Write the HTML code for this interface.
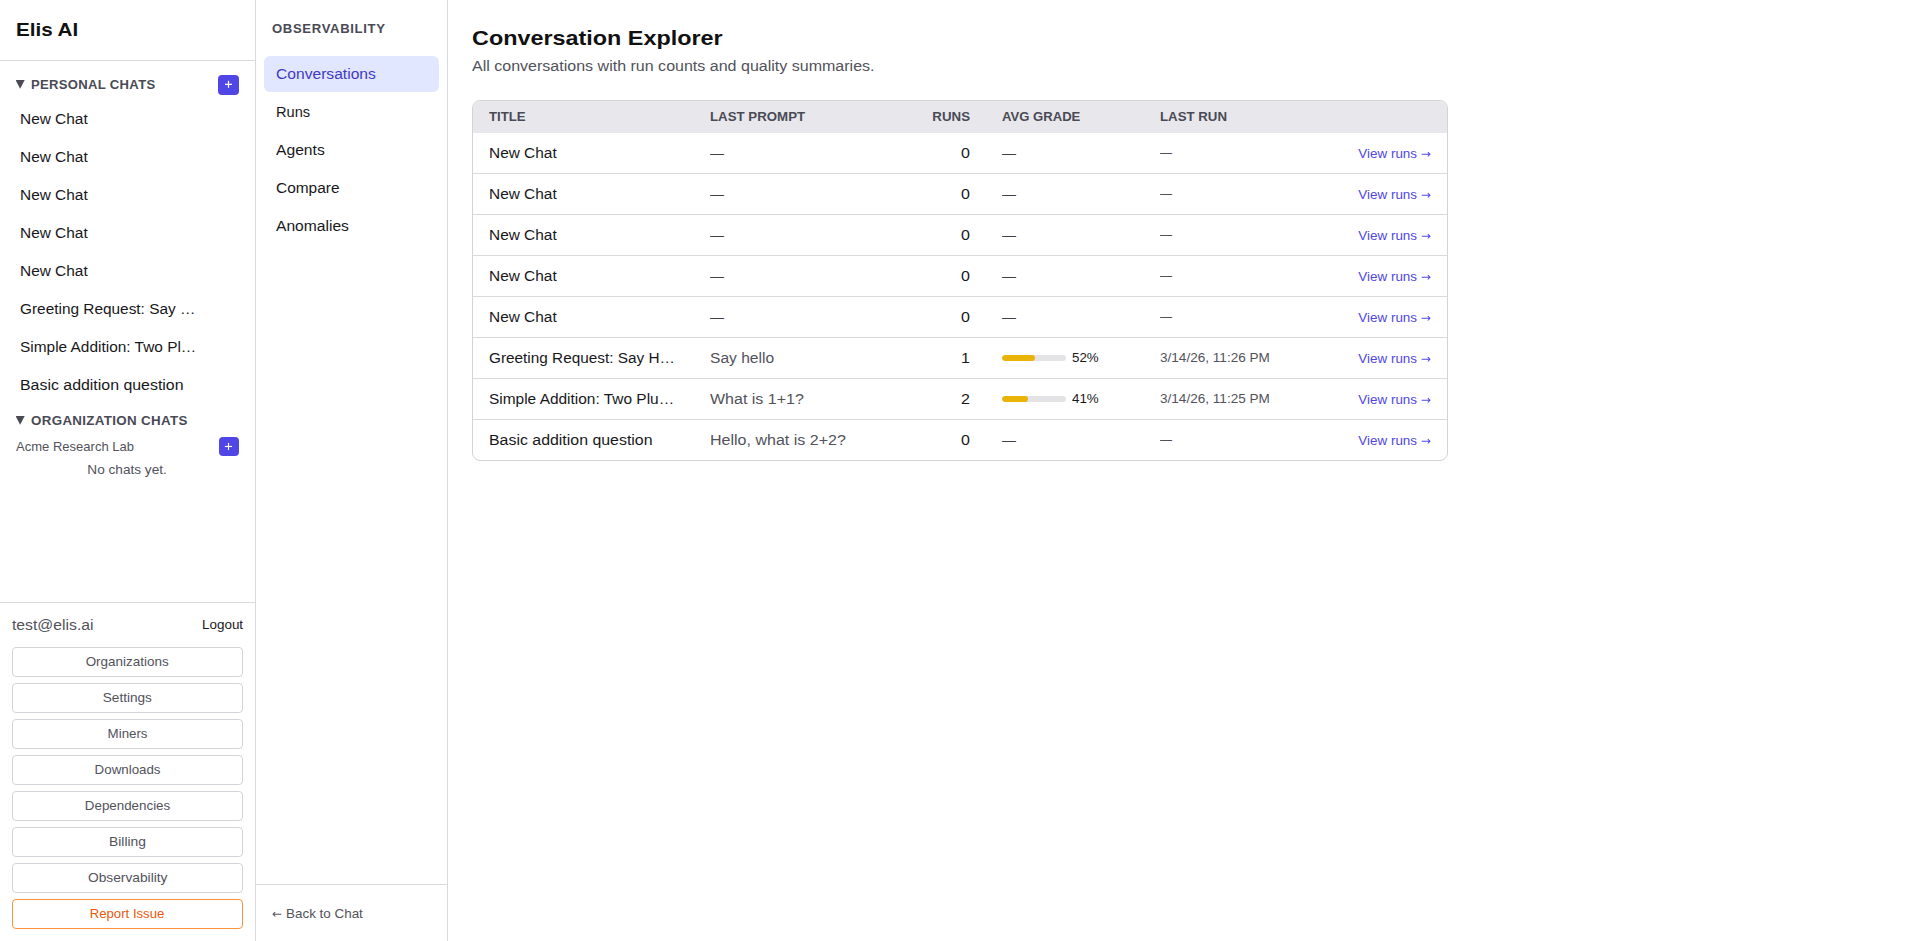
<!DOCTYPE html>
<html><head><meta charset="utf-8">
<style>
html,body{margin:0;padding:0;background:#fff;}
body{width:1920px;height:941px;overflow:hidden;position:relative;font-family:"Liberation Sans", sans-serif;color:#18181b;}

.t{position:absolute;white-space:nowrap;line-height:1;}
.s12{font-size:12px}.s14{font-size:14px}.s18{font-size:18px}.s20{font-size:20px}
.b{font-weight:bold}
.arr{position:absolute;width:10.055px;height:10.055px;overflow:visible}
.tri{position:absolute;width:9.1px;height:8.7px;background:#4a4a55;clip-path:polygon(0 0,100% 0,50% 100%)}
.hl{position:absolute;background:#d9d9de;}
.btn{position:absolute;left:12px;width:229px;height:28px;border:1px solid #d4d4d8;border-radius:4px;background:#fff;}
.btn>span{position:absolute;left:0;right:0;top:8px;text-align:center;font-size:12px;line-height:1;color:#52525b;white-space:nowrap}
.plus{position:absolute;background:#4f46e5;border-radius:4px;}
.plus svg{position:absolute;left:0;top:0;width:100%;height:100%}
</style></head>
<body>
<!-- left sidebar -->
<div class="hl" style="left:255px;top:0;width:1px;height:941px"></div>
<div class="hl" style="left:0;top:60px;width:255px;height:1px"></div>
<div class="t s18 b" style="left: 16px; top: 21px; color: rgb(17, 17, 17); line-height: 18px; font-size: 18.54px;"><span style="display:inline-block;transform:scaleX(1.1122);transform-origin:left center">Elis AI</span></div>

<div class="tri" style="left:15.6px;top:80.1px"></div>
<div class="t s12 b" style="left: 31px; top: 79px; color: rgb(74, 74, 85); letter-spacing: 0.3px; line-height: 12px; font-size: 12.36px;"><span style="display:inline-block;transform:scaleX(1.0572);transform-origin:left center">PERSONAL CHATS</span></div>
<div class="plus" style="left:218px;top:75px;width:21px;height:20px"><svg viewBox="0 0 21 20"><rect x="7" y="8.7" width="7" height="1.25" fill="#fff"></rect><rect x="9.875" y="5.8" width="1.25" height="7" fill="#fff"></rect></svg></div>

<div class="t s14" style="left: 20px; top: 112px; line-height: 14px; font-size: 14.42px;"><span style="display:inline-block;transform:scaleX(1.0701);transform-origin:left center">New Chat</span></div>
<div class="t s14" style="left: 20px; top: 150px; line-height: 14px; font-size: 14.42px;"><span style="display:inline-block;transform:scaleX(1.0701);transform-origin:left center">New Chat</span></div>
<div class="t s14" style="left: 20px; top: 188px; line-height: 14px; font-size: 14.42px;"><span style="display:inline-block;transform:scaleX(1.0701);transform-origin:left center">New Chat</span></div>
<div class="t s14" style="left: 20px; top: 226px; line-height: 14px; font-size: 14.42px;"><span style="display:inline-block;transform:scaleX(1.0701);transform-origin:left center">New Chat</span></div>
<div class="t s14" style="left: 20px; top: 264px; line-height: 14px; font-size: 14.42px;"><span style="display:inline-block;transform:scaleX(1.0701);transform-origin:left center">New Chat</span></div>
<div class="t s14" style="left: 20px; top: 302px; line-height: 14px; font-size: 14.42px;"><span style="display:inline-block;transform:scaleX(1.0682);transform-origin:left center">Greeting Request: Say …</span></div>
<div class="t s14" style="left: 20px; top: 340px; line-height: 14px; font-size: 14.42px;"><span style="display:inline-block;transform:scaleX(1.0703);transform-origin:left center">Simple Addition: Two Pl…</span></div>
<div class="t s14" style="left: 20px; top: 378px; line-height: 14px; font-size: 14.42px;"><span style="display:inline-block;transform:scaleX(1.1036);transform-origin:left center">Basic addition question</span></div>

<div class="tri" style="left:15.6px;top:416.1px"></div>
<div class="t s12 b" style="left: 31px; top: 415px; color: rgb(74, 74, 85); letter-spacing: 0.3px; line-height: 12px; font-size: 12.36px;"><span style="display:inline-block;transform:scaleX(1.0803);transform-origin:left center">ORGANIZATION CHATS</span></div>
<div class="t s12" style="left: 16px; top: 441px; color: rgb(82, 82, 91); line-height: 12px; font-size: 12.36px;"><span style="display:inline-block;transform:scaleX(1.0537);transform-origin:left center">Acme Research Lab</span></div>
<div class="plus" style="left:219px;top:437px;width:20px;height:19px"><svg viewBox="0 0 20 19"><rect x="5.9" y="8.9" width="7.2" height="1.15" fill="#fff"></rect><rect x="8.925" y="5.9" width="1.15" height="7.1" fill="#fff"></rect></svg></div>
<div class="t s12" style="left: 0px; width: 255px; text-align: center; top: 464px; color: rgb(82, 82, 91); line-height: 12px; font-size: 12.36px;"><span style="display:inline-block;transform:scaleX(1.1016);transform-origin:center center">No chats yet.</span></div>

<div class="hl" style="left:0;top:602px;width:255px;height:1px"></div>
<div class="t s14" style="left: 12px; top: 618px; color: rgb(82, 82, 91); line-height: 14px; font-size: 14.42px;"><span style="display:inline-block;transform:scaleX(1.0912);transform-origin:left center">test@elis.ai</span></div>
<div class="t s12" style="left: 202px; top: 619px; color: rgb(24, 24, 27); line-height: 12px; font-size: 12.36px;"><span style="display:inline-block;transform:scaleX(1.0868);transform-origin:left center">Logout</span></div>
<div class="btn" style="top:647px"><span style="line-height: 12px; font-size: 12.36px;"><span style="display:inline-block;transform:scaleX(1.0879);transform-origin:center center">Organizations</span></span></div>
<div class="btn" style="top:683px"><span style="line-height: 12px; font-size: 12.36px;"><span style="display:inline-block;transform:scaleX(1.1018);transform-origin:center center">Settings</span></span></div>
<div class="btn" style="top:719px"><span style="line-height: 12px; font-size: 12.36px;"><span style="display:inline-block;transform:scaleX(1.0750);transform-origin:center center">Miners</span></span></div>
<div class="btn" style="top:755px"><span style="line-height: 12px; font-size: 12.36px;"><span style="display:inline-block;transform:scaleX(1.0777);transform-origin:center center">Downloads</span></span></div>
<div class="btn" style="top:791px"><span style="line-height: 12px; font-size: 12.36px;"><span style="display:inline-block;transform:scaleX(1.0807);transform-origin:center center">Dependencies</span></span></div>
<div class="btn" style="top:827px"><span style="line-height: 12px; font-size: 12.36px;"><span style="display:inline-block;transform:scaleX(1.1156);transform-origin:center center">Billing</span></span></div>
<div class="btn" style="top:863px"><span style="line-height: 12px; font-size: 12.36px;"><span style="display:inline-block;transform:scaleX(1.1131);transform-origin:center center">Observability</span></span></div>
<div class="btn" style="top:899px;border-color:#fb923c"><span style="color: rgb(234, 88, 12); line-height: 12px; font-size: 12.36px;"><span style="display:inline-block;transform:scaleX(1.0649);transform-origin:center center">Report Issue</span></span></div>

<!-- middle nav -->
<div class="hl" style="left:447px;top:0;width:1px;height:941px"></div>
<div class="hl" style="left:256px;top:884px;width:191px;height:1px"></div>
<div class="t s12 b" style="left: 272px; top: 23px; color: rgb(74, 74, 85); letter-spacing: 0.6px; line-height: 12px; font-size: 12.36px;"><span style="display:inline-block;transform:scaleX(1.0624);transform-origin:left center">OBSERVABILITY</span></div>
<div style="position:absolute;left:264px;top:56px;width:175px;height:36px;background:#e0e7ff;border-radius:6px"></div>
<div class="t s14" style="left: 276px; top: 67px; color: rgb(67, 56, 202); line-height: 14px; font-size: 14.42px;"><span style="display:inline-block;transform:scaleX(1.0843);transform-origin:left center">Conversations</span></div>
<div class="t s14" style="left: 276px; top: 105px; line-height: 14px; font-size: 14.42px;"><span style="display:inline-block;transform:scaleX(1.0149);transform-origin:left center">Runs</span></div>
<div class="t s14" style="left: 276px; top: 143px; line-height: 14px; font-size: 14.42px;"><span style="display:inline-block;transform:scaleX(1.0864);transform-origin:left center">Agents</span></div>
<div class="t s14" style="left: 276px; top: 181px; line-height: 14px; font-size: 14.42px;"><span style="display:inline-block;transform:scaleX(1.0720);transform-origin:left center">Compare</span></div>
<div class="t s14" style="left: 276px; top: 219px; line-height: 14px; font-size: 14.42px;"><span style="display:inline-block;transform:scaleX(1.0841);transform-origin:left center">Anomalies</span></div>
<svg class="arr" style="left:272px;top:907.945px" viewBox="0 -1716 1716 1716"><path fill="#52525b" transform="scale(1,-1)" d="M100 597V687L493 1080L613 960L380 727H1599V557H380L613 324L493 204Z"></path></svg>
<div class="t s12" style="left: 285.86px; top: 908px; color: rgb(82, 82, 91); line-height: 12px; font-size: 12.36px;"><span style="display:inline-block;transform:scaleX(1.0861);transform-origin:left center">Back to Chat</span></div>

<!-- main -->
<div class="t s20 b" style="left: 472px; top: 28px; color: rgb(17, 17, 17); line-height: 20px; font-size: 20.6px;"><span style="display:inline-block;transform:scaleX(1.1348);transform-origin:left center">Conversation Explorer</span></div>
<div class="t s14" style="left: 472px; top: 59px; color: rgb(82, 82, 91); line-height: 14px; font-size: 14.42px;"><span style="display:inline-block;transform:scaleX(1.1122);transform-origin:left center">All conversations with run counts and quality summaries.</span></div>

<div id="tbl" style="position:absolute;left:472px;top:100px;width:974px;height:359px;border:1px solid #d4d4d8;border-radius:8px;overflow:hidden"></div>
<div style="position:absolute;left:473px;top:101px;width:974px;height:32px;background:#e8e8ec;border-radius:7px 7px 0 0"></div>
<div class="t s12 b" style="left: 489px; top: 111px; color: rgb(74, 74, 85); line-height: 12px; font-size: 12.36px;"><span style="display:inline-block;transform:scaleX(1.0687);transform-origin:left center">TITLE</span></div>
<div class="t s12 b" style="left: 710px; top: 111px; color: rgb(74, 74, 85); line-height: 12px; font-size: 12.36px;"><span style="display:inline-block;transform:scaleX(1.0737);transform-origin:left center">LAST PROMPT</span></div>
<div class="t s12 b" style="left: 1002px; top: 111px; color: rgb(74, 74, 85); line-height: 12px; font-size: 12.36px;"><span style="display:inline-block;transform:scaleX(1.0594);transform-origin:left center">AVG GRADE</span></div>
<div class="t s12 b" style="left: 1160px; top: 111px; color: rgb(74, 74, 85); line-height: 12px; font-size: 12.36px;"><span style="display:inline-block;transform:scaleX(1.0718);transform-origin:left center">LAST RUN</span></div>
<div class="t s12 b" style="left: 885px; width: 85px; text-align: right; top: 111px; color: rgb(74, 74, 85); line-height: 12px; font-size: 12.36px;"><span style="display:inline-block;transform:scaleX(1.0754);transform-origin:right center">RUNS</span></div>
<div class="t s14" style="left: 489px; top: 146px; line-height: 14px; font-size: 14.42px;"><span style="display:inline-block;transform:scaleX(1.0701);transform-origin:left center">New Chat</span></div>
<div class="t s14" style="left: 710px; top: 146px; color: rgb(63, 63, 70); line-height: 14px; font-size: 14.42px;"><span style="display:inline-block;transform:scaleX(0.9718);transform-origin:left center">—</span></div>
<div class="t s14" style="left: 885px; width: 85px; text-align: right; top: 146px; line-height: 14px; font-size: 14.42px;"><span style="display:inline-block;transform:scaleX(1.1131);transform-origin:right center">0</span></div>
<div class="t s14" style="left: 1002px; top: 146px; color: rgb(63, 63, 70); line-height: 14px; font-size: 14.42px;"><span style="display:inline-block;transform:scaleX(0.9718);transform-origin:left center">—</span></div>
<div class="t s12" style="left: 1160px; top: 147px; color: rgb(82, 82, 91); line-height: 12px; font-size: 12.36px;"><span style="display:inline-block;transform:scaleX(0.9709);transform-origin:left center">—</span></div>
<div class="t s12" style="left: 1300px; width: 117.14px; text-align: right; top: 148px; color: rgb(79, 70, 229); line-height: 12px; font-size: 12.36px;"><span style="display:inline-block;transform:scaleX(1.0859);transform-origin:right center">View runs</span></div>
<svg class="arr" style="left:1420.95px;top:147.945px" viewBox="0 -1716 1716 1716"><path fill="#4f46e5" transform="scale(1,-1)" d="M1616 687V597L1223 204L1103 324L1336 557H117V727H1336L1103 960L1223 1080Z"></path></svg>
<div class="hl" style="left:473px;top:173px;width:974px;height:1px"></div>
<div class="t s14" style="left: 489px; top: 187px; line-height: 14px; font-size: 14.42px;"><span style="display:inline-block;transform:scaleX(1.0701);transform-origin:left center">New Chat</span></div>
<div class="t s14" style="left: 710px; top: 187px; color: rgb(63, 63, 70); line-height: 14px; font-size: 14.42px;"><span style="display:inline-block;transform:scaleX(0.9718);transform-origin:left center">—</span></div>
<div class="t s14" style="left: 885px; width: 85px; text-align: right; top: 187px; line-height: 14px; font-size: 14.42px;"><span style="display:inline-block;transform:scaleX(1.1131);transform-origin:right center">0</span></div>
<div class="t s14" style="left: 1002px; top: 187px; color: rgb(63, 63, 70); line-height: 14px; font-size: 14.42px;"><span style="display:inline-block;transform:scaleX(0.9718);transform-origin:left center">—</span></div>
<div class="t s12" style="left: 1160px; top: 188px; color: rgb(82, 82, 91); line-height: 12px; font-size: 12.36px;"><span style="display:inline-block;transform:scaleX(0.9709);transform-origin:left center">—</span></div>
<div class="t s12" style="left: 1300px; width: 117.14px; text-align: right; top: 189px; color: rgb(79, 70, 229); line-height: 12px; font-size: 12.36px;"><span style="display:inline-block;transform:scaleX(1.0859);transform-origin:right center">View runs</span></div>
<svg class="arr" style="left:1420.95px;top:188.945px" viewBox="0 -1716 1716 1716"><path fill="#4f46e5" transform="scale(1,-1)" d="M1616 687V597L1223 204L1103 324L1336 557H117V727H1336L1103 960L1223 1080Z"></path></svg>
<div class="hl" style="left:473px;top:214px;width:974px;height:1px"></div>
<div class="t s14" style="left: 489px; top: 228px; line-height: 14px; font-size: 14.42px;"><span style="display:inline-block;transform:scaleX(1.0701);transform-origin:left center">New Chat</span></div>
<div class="t s14" style="left: 710px; top: 228px; color: rgb(63, 63, 70); line-height: 14px; font-size: 14.42px;"><span style="display:inline-block;transform:scaleX(0.9718);transform-origin:left center">—</span></div>
<div class="t s14" style="left: 885px; width: 85px; text-align: right; top: 228px; line-height: 14px; font-size: 14.42px;"><span style="display:inline-block;transform:scaleX(1.1131);transform-origin:right center">0</span></div>
<div class="t s14" style="left: 1002px; top: 228px; color: rgb(63, 63, 70); line-height: 14px; font-size: 14.42px;"><span style="display:inline-block;transform:scaleX(0.9718);transform-origin:left center">—</span></div>
<div class="t s12" style="left: 1160px; top: 229px; color: rgb(82, 82, 91); line-height: 12px; font-size: 12.36px;"><span style="display:inline-block;transform:scaleX(0.9709);transform-origin:left center">—</span></div>
<div class="t s12" style="left: 1300px; width: 117.14px; text-align: right; top: 230px; color: rgb(79, 70, 229); line-height: 12px; font-size: 12.36px;"><span style="display:inline-block;transform:scaleX(1.0859);transform-origin:right center">View runs</span></div>
<svg class="arr" style="left:1420.95px;top:229.945px" viewBox="0 -1716 1716 1716"><path fill="#4f46e5" transform="scale(1,-1)" d="M1616 687V597L1223 204L1103 324L1336 557H117V727H1336L1103 960L1223 1080Z"></path></svg>
<div class="hl" style="left:473px;top:255px;width:974px;height:1px"></div>
<div class="t s14" style="left: 489px; top: 269px; line-height: 14px; font-size: 14.42px;"><span style="display:inline-block;transform:scaleX(1.0701);transform-origin:left center">New Chat</span></div>
<div class="t s14" style="left: 710px; top: 269px; color: rgb(63, 63, 70); line-height: 14px; font-size: 14.42px;"><span style="display:inline-block;transform:scaleX(0.9718);transform-origin:left center">—</span></div>
<div class="t s14" style="left: 885px; width: 85px; text-align: right; top: 269px; line-height: 14px; font-size: 14.42px;"><span style="display:inline-block;transform:scaleX(1.1131);transform-origin:right center">0</span></div>
<div class="t s14" style="left: 1002px; top: 269px; color: rgb(63, 63, 70); line-height: 14px; font-size: 14.42px;"><span style="display:inline-block;transform:scaleX(0.9718);transform-origin:left center">—</span></div>
<div class="t s12" style="left: 1160px; top: 270px; color: rgb(82, 82, 91); line-height: 12px; font-size: 12.36px;"><span style="display:inline-block;transform:scaleX(0.9709);transform-origin:left center">—</span></div>
<div class="t s12" style="left: 1300px; width: 117.14px; text-align: right; top: 271px; color: rgb(79, 70, 229); line-height: 12px; font-size: 12.36px;"><span style="display:inline-block;transform:scaleX(1.0859);transform-origin:right center">View runs</span></div>
<svg class="arr" style="left:1420.95px;top:270.945px" viewBox="0 -1716 1716 1716"><path fill="#4f46e5" transform="scale(1,-1)" d="M1616 687V597L1223 204L1103 324L1336 557H117V727H1336L1103 960L1223 1080Z"></path></svg>
<div class="hl" style="left:473px;top:296px;width:974px;height:1px"></div>
<div class="t s14" style="left: 489px; top: 310px; line-height: 14px; font-size: 14.42px;"><span style="display:inline-block;transform:scaleX(1.0701);transform-origin:left center">New Chat</span></div>
<div class="t s14" style="left: 710px; top: 310px; color: rgb(63, 63, 70); line-height: 14px; font-size: 14.42px;"><span style="display:inline-block;transform:scaleX(0.9718);transform-origin:left center">—</span></div>
<div class="t s14" style="left: 885px; width: 85px; text-align: right; top: 310px; line-height: 14px; font-size: 14.42px;"><span style="display:inline-block;transform:scaleX(1.1131);transform-origin:right center">0</span></div>
<div class="t s14" style="left: 1002px; top: 310px; color: rgb(63, 63, 70); line-height: 14px; font-size: 14.42px;"><span style="display:inline-block;transform:scaleX(0.9718);transform-origin:left center">—</span></div>
<div class="t s12" style="left: 1160px; top: 311px; color: rgb(82, 82, 91); line-height: 12px; font-size: 12.36px;"><span style="display:inline-block;transform:scaleX(0.9709);transform-origin:left center">—</span></div>
<div class="t s12" style="left: 1300px; width: 117.14px; text-align: right; top: 312px; color: rgb(79, 70, 229); line-height: 12px; font-size: 12.36px;"><span style="display:inline-block;transform:scaleX(1.0859);transform-origin:right center">View runs</span></div>
<svg class="arr" style="left:1420.95px;top:311.945px" viewBox="0 -1716 1716 1716"><path fill="#4f46e5" transform="scale(1,-1)" d="M1616 687V597L1223 204L1103 324L1336 557H117V727H1336L1103 960L1223 1080Z"></path></svg>
<div class="hl" style="left:473px;top:337px;width:974px;height:1px"></div>
<div class="t s14" style="left: 489px; top: 351px; line-height: 14px; font-size: 14.42px;"><span style="display:inline-block;transform:scaleX(1.0649);transform-origin:left center">Greeting Request: Say H…</span></div>
<div class="t s14" style="left: 710px; top: 351px; color: rgb(82, 82, 91); line-height: 14px; font-size: 14.42px;"><span style="display:inline-block;transform:scaleX(1.0807);transform-origin:left center">Say hello</span></div>
<div class="t s14" style="left: 885px; width: 85px; text-align: right; top: 351px; line-height: 14px; font-size: 14.42px;"><span style="display:inline-block;transform:scaleX(1.1131);transform-origin:right center">1</span></div>
<div style="position:absolute;left:1002px;top:355px;width:64px;height:6px;border-radius:3px;background:#e4e4e7;overflow:hidden"><div style="width:52%;height:6px;background:#eab308;border-radius:3px"></div></div>
<div class="t s12" style="left: 1072px; top: 352px; color: rgb(24, 24, 27); line-height: 12px; font-size: 12.36px;"><span style="display:inline-block;transform:scaleX(1.0777);transform-origin:left center">52%</span></div>
<div class="t s12" style="left: 1160px; top: 352px; color: rgb(82, 82, 91); line-height: 12px; font-size: 12.36px;"><span style="display:inline-block;transform:scaleX(1.0977);transform-origin:left center">3/14/26, 11:26 PM</span></div>
<div class="t s12" style="left: 1300px; width: 117.14px; text-align: right; top: 353px; color: rgb(79, 70, 229); line-height: 12px; font-size: 12.36px;"><span style="display:inline-block;transform:scaleX(1.0859);transform-origin:right center">View runs</span></div>
<svg class="arr" style="left:1420.95px;top:352.945px" viewBox="0 -1716 1716 1716"><path fill="#4f46e5" transform="scale(1,-1)" d="M1616 687V597L1223 204L1103 324L1336 557H117V727H1336L1103 960L1223 1080Z"></path></svg>
<div class="hl" style="left:473px;top:378px;width:974px;height:1px"></div>
<div class="t s14" style="left: 489px; top: 392px; line-height: 14px; font-size: 14.42px;"><span style="display:inline-block;transform:scaleX(1.0720);transform-origin:left center">Simple Addition: Two Plu…</span></div>
<div class="t s14" style="left: 710px; top: 392px; color: rgb(82, 82, 91); line-height: 14px; font-size: 14.42px;"><span style="display:inline-block;transform:scaleX(1.1108);transform-origin:left center">What is 1+1?</span></div>
<div class="t s14" style="left: 885px; width: 85px; text-align: right; top: 392px; line-height: 14px; font-size: 14.42px;"><span style="display:inline-block;transform:scaleX(1.1131);transform-origin:right center">2</span></div>
<div style="position:absolute;left:1002px;top:396px;width:64px;height:6px;border-radius:3px;background:#e4e4e7;overflow:hidden"><div style="width:41%;height:6px;background:#eab308;border-radius:3px"></div></div>
<div class="t s12" style="left: 1072px; top: 393px; color: rgb(24, 24, 27); line-height: 12px; font-size: 12.36px;"><span style="display:inline-block;transform:scaleX(1.0777);transform-origin:left center">41%</span></div>
<div class="t s12" style="left: 1160px; top: 393px; color: rgb(82, 82, 91); line-height: 12px; font-size: 12.36px;"><span style="display:inline-block;transform:scaleX(1.0977);transform-origin:left center">3/14/26, 11:25 PM</span></div>
<div class="t s12" style="left: 1300px; width: 117.14px; text-align: right; top: 394px; color: rgb(79, 70, 229); line-height: 12px; font-size: 12.36px;"><span style="display:inline-block;transform:scaleX(1.0859);transform-origin:right center">View runs</span></div>
<svg class="arr" style="left:1420.95px;top:393.945px" viewBox="0 -1716 1716 1716"><path fill="#4f46e5" transform="scale(1,-1)" d="M1616 687V597L1223 204L1103 324L1336 557H117V727H1336L1103 960L1223 1080Z"></path></svg>
<div class="hl" style="left:473px;top:419px;width:974px;height:1px"></div>
<div class="t s14" style="left: 489px; top: 433px; line-height: 14px; font-size: 14.42px;"><span style="display:inline-block;transform:scaleX(1.1036);transform-origin:left center">Basic addition question</span></div>
<div class="t s14" style="left: 710px; top: 433px; color: rgb(82, 82, 91); line-height: 14px; font-size: 14.42px;"><span style="display:inline-block;transform:scaleX(1.1123);transform-origin:left center">Hello, what is 2+2?</span></div>
<div class="t s14" style="left: 885px; width: 85px; text-align: right; top: 433px; line-height: 14px; font-size: 14.42px;"><span style="display:inline-block;transform:scaleX(1.1131);transform-origin:right center">0</span></div>
<div class="t s14" style="left: 1002px; top: 433px; color: rgb(63, 63, 70); line-height: 14px; font-size: 14.42px;"><span style="display:inline-block;transform:scaleX(0.9718);transform-origin:left center">—</span></div>
<div class="t s12" style="left: 1160px; top: 434px; color: rgb(82, 82, 91); line-height: 12px; font-size: 12.36px;"><span style="display:inline-block;transform:scaleX(0.9709);transform-origin:left center">—</span></div>
<div class="t s12" style="left: 1300px; width: 117.14px; text-align: right; top: 435px; color: rgb(79, 70, 229); line-height: 12px; font-size: 12.36px;"><span style="display:inline-block;transform:scaleX(1.0859);transform-origin:right center">View runs</span></div>
<svg class="arr" style="left:1420.95px;top:434.945px" viewBox="0 -1716 1716 1716"><path fill="#4f46e5" transform="scale(1,-1)" d="M1616 687V597L1223 204L1103 324L1336 557H117V727H1336L1103 960L1223 1080Z"></path></svg>

</body></html>
